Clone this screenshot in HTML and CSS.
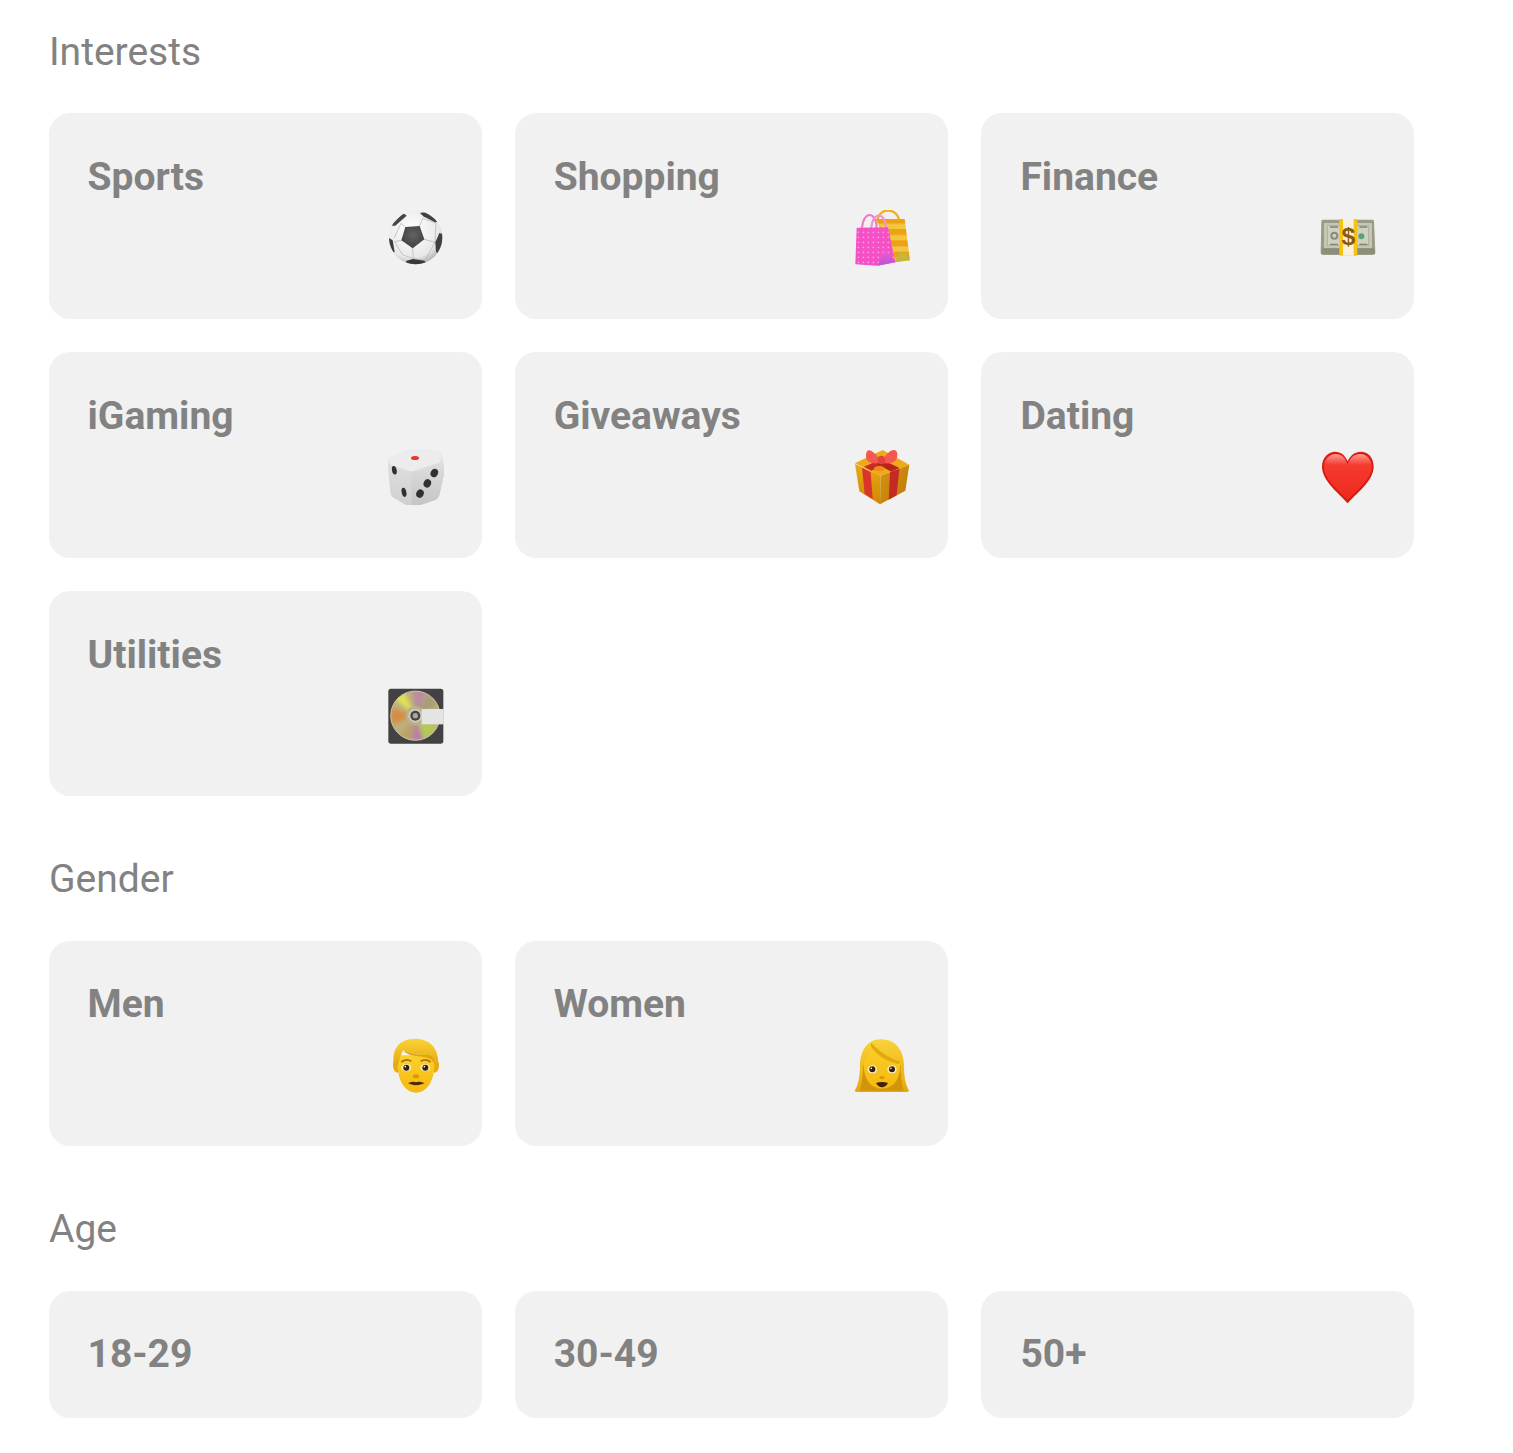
FILE: index.html
```html
<!DOCTYPE html>
<html lang="en">
<head>
<meta charset="utf-8">
<title>Audience</title>
<link rel="stylesheet" href="styles.css">
</head>
<body>
<svg class="defs" width="0" height="0" aria-hidden="true">
  <defs>
    <radialGradient id="ball" cx="0.42" cy="0.36" r="0.72"><stop offset="0" stop-color="#fff"/><stop offset="0.72" stop-color="#e8e8e8"/><stop offset="1" stop-color="#9d9d9d"/></radialGradient>
    <radialGradient id="patch" cx="0.5" cy="0.4" r="0.7"><stop offset="0" stop-color="#636363"/><stop offset="1" stop-color="#3a3a3a"/></radialGradient>
    <pattern id="dots" width="15" height="15" patternUnits="userSpaceOnUse"><rect width="15" height="15" fill="#f550c6"/><circle cx="7" cy="7" r="2.6" fill="#fa9fe0"/></pattern>
    <pattern id="stripes" width="34" height="34" patternUnits="userSpaceOnUse"><rect width="34" height="34" fill="#eda212"/><rect y="18" width="34" height="16" fill="#f0c642"/></pattern>
    <linearGradient id="gusset" x1="0" y1="0" x2="0" y2="1"><stop offset="0" stop-color="#ef5fcc"/><stop offset="1" stop-color="#bb52d8"/></linearGradient>
    <linearGradient id="dieL" x1="0" y1="0" x2="0" y2="1"><stop offset="0" stop-color="#e4e4e4"/><stop offset="1" stop-color="#cfcfcf"/></linearGradient>
    <linearGradient id="dieR" x1="0" y1="0" x2="0" y2="1"><stop offset="0" stop-color="#dedede"/><stop offset="1" stop-color="#c4c4c4"/></linearGradient>
    <linearGradient id="giftL" x1="0" y1="0" x2="0" y2="1"><stop offset="0" stop-color="#eaa912"/><stop offset="1" stop-color="#d08706"/></linearGradient>
    <linearGradient id="giftR" x1="0" y1="0" x2="1" y2="1"><stop offset="0" stop-color="#d79310"/><stop offset="1" stop-color="#bc7a06"/></linearGradient>
    <linearGradient id="heart" x1="0" y1="0" x2="0" y2="1"><stop offset="0" stop-color="#ff9a90"/><stop offset="0.24" stop-color="#f53a30"/><stop offset="1" stop-color="#ee2a1e"/></linearGradient>
    <linearGradient id="face" x1="0" y1="0" x2="0" y2="1"><stop offset="0" stop-color="#fdd02c"/><stop offset="1" stop-color="#f4b90f"/></linearGradient>
    <linearGradient id="hair" x1="0" y1="0" x2="0" y2="1"><stop offset="0" stop-color="#f9d338"/><stop offset="1" stop-color="#e5a80e"/></linearGradient>
    <filter id="soft" x="-20%" y="-20%" width="140%" height="140%"><feGaussianBlur stdDeviation="7"/></filter>
    <clipPath id="ballClip"><circle cx="137" cy="128" r="80"/></clipPath>
    <clipPath id="discClip"><circle cx="136" cy="128" r="74"/></clipPath>
  </defs>
</svg>

<main class="page">
  <section class="group">
    <h2 class="label">Interests</h2>
    <div class="cards">
      <div class="card">
        <h3 class="name">Sports</h3>
        <svg class="emoji" viewBox="54 45 168 168" aria-hidden="true">
          <circle cx="137" cy="128" r="80" fill="url(#ball)"/>
          <g clip-path="url(#ballClip)">
            <g stroke="#bcbcbc" stroke-width="2.5" fill="none">
              <path d="M107 97 93 85M148 95 158 70M160 132 195 142M128 158 130 190M97 135 74 140M130 190 165 195M130 190 98 180M195 142 165 195M74 140 98 180M158 70 198 84 195 142M93 85 72 130"/>
            </g>
            <path d="M106 96 149 93 163 133 128 160 94 136Z" fill="url(#patch)"/>
            <path d="M62 92 100 54 110 62 76 92Z" fill="#474747"/>
            <path d="M150 54 180 48 205 80 195 82 160 64Z" fill="#3f3f3f"/>
            <path d="M196 142 208 114 225 120 210 180 198 170Z" fill="#404040"/>
            <path d="M108 198 128 192 164 197 170 212 110 212Z" fill="#393939"/>
            <path d="M55 128 68 136 74 172 60 170Z" fill="#3c3c3c"/>
          </g>
        </svg>
      </div>
      <div class="card">
        <h3 class="name">Shopping</h3>
        <svg class="emoji" viewBox="54 45 168 168" aria-hidden="true">
          <path d="M124 78C128 36 184 36 190 78" fill="none" stroke="#f0b21e" stroke-width="7"/>
          <path d="M120 72 206 72 222 196 174 202Z" fill="url(#stripes)"/>
          <path d="M176 202 222 196 214 178 190 170Z" fill="#c4b53c"/>
          <path d="M78 102C80 46 122 46 122 102" fill="none" stroke="#f277cf" stroke-width="6"/>
          <path d="M106 100C108 48 150 50 150 100" fill="none" stroke="#f490d8" stroke-width="6"/>
          <path d="M62 98 156 96 178 202 124 212 58 208Z" fill="url(#dots)"/>
          <path d="M124 212 148 164 178 202Z" fill="url(#gusset)"/>
        </svg>
      </div>
      <div class="card">
        <h3 class="name">Finance</h3>
        <svg class="emoji" viewBox="54 45 168 168" aria-hidden="true">
          <path d="M62 74H212Q216 74 216 80L220 172Q220 180 212 180H64Q56 180 56 172L58 80Q58 74 62 74Z" fill="#9b9b88"/>
          <rect x="66" y="84" width="144" height="76" rx="3" fill="#c5c6b4"/>
          <rect x="76" y="92" width="124" height="60" fill="#cfd0c0" stroke="#a6a795" stroke-width="2"/>
          <path d="M84 96H108M172 96H196M84 148H108M172 148H196" stroke="#7f8174" stroke-width="4"/>
          <circle cx="97" cy="122" r="12" fill="#8a8c7a"/><circle cx="97" cy="122" r="6" fill="#d0d0c2"/>
          <circle cx="178" cy="124" r="9" fill="#5b9f7b"/>
          <path d="M60 160H216L219 176H58Z" fill="#8d8e7a"/>
          <rect x="112" y="72" width="54" height="110" fill="#f6c30f"/>
          <rect x="123" y="72" width="32" height="110" fill="#f7f1dc"/>
          <text class="dollar" x="139" y="151">$</text>
        </svg>
      </div>
      <div class="card">
        <h3 class="name">iGaming</h3>
        <svg class="emoji" viewBox="54 45 168 168" aria-hidden="true">
          <g transform="translate(137 130) scale(1.07) translate(-137 -130)">
            <path d="M58 92Q56 80 70 72L124 50Q136 46 150 48L196 56Q210 58 212 72L218 108Q220 120 214 132L204 178Q200 192 186 196L136 212Q124 216 110 208L76 188Q66 182 66 170Z" fill="url(#dieL)"/>
            <path d="M125 110 206 88Q216 88 218 108Q220 120 214 132L204 178Q200 192 186 196L136 212Q130 214 126 212Z" fill="url(#dieR)"/>
            <path d="M62 82Q66 74 74 72L124 50Q136 46 150 48L196 56Q206 58 210 70 212 84 200 90L132 112Q122 114 112 110L70 96Q60 92 62 82Z" fill="#ececec"/>
          </g>
          <ellipse cx="135" cy="72" rx="12" ry="6" fill="#e8332f"/>
          <ellipse cx="73" cy="109" rx="7" ry="13" fill="#303030" transform="rotate(-12 73 109)"/>
          <ellipse cx="102" cy="175" rx="7" ry="14" fill="#303030" transform="rotate(-12 102 175)"/>
          <ellipse cx="193" cy="117" rx="11" ry="13" fill="#303030" transform="rotate(25 193 117)"/>
          <ellipse cx="172" cy="148" rx="11" ry="13" fill="#303030" transform="rotate(25 172 148)"/>
          <ellipse cx="150" cy="179" rx="11" ry="13" fill="#303030" transform="rotate(25 150 179)"/>
        </svg>
      </div>
      <div class="card">
        <h3 class="name">Giveaways</h3>
        <svg class="emoji" viewBox="54 45 168 168" aria-hidden="true">
          <path d="M57 90 70 172 132 211 134 125Z" fill="url(#giftL)"/>
          <path d="M134 125 220 92 208 170 132 211Z" fill="url(#giftR)"/>
          <path d="M57 88 140 48 220 92 134 126Z" fill="#edab1a"/>
          <path d="M78 101 104 115 110 195 86 180Z" fill="#d9352b"/>
          <path d="M162 115 190 104 182 184 158 197Z" fill="#c42a22"/>
          <path d="M84 98 160 66 176 74 106 110Z" fill="#c92c23"/>
          <path d="M112 64 190 102 166 113 94 74Z" fill="#b92319"/>
          <ellipse cx="130" cy="104" rx="16" ry="8" fill="#ef8a1b"/>
          <path d="M132 78C110 46 92 40 90 62 88 86 110 92 134 86Z" fill="#f4584e"/>
          <path d="M140 78C160 44 184 40 184 62 184 86 160 92 138 86Z" fill="#f4584e"/>
          <ellipse cx="136" cy="78" rx="11" ry="13" fill="#e4423a"/>
        </svg>
      </div>
      <div class="card">
        <h3 class="name">Dating</h3>
        <svg class="emoji" viewBox="54 45 168 168" aria-hidden="true">
          <path d="M137 208C116 182 60 142 60 98 60 70 80 53 100 53 116 53 130 64 137 82 144 64 160 53 176 53 198 53 215 70 215 98 215 142 158 182 137 208Z" fill="#d81c12"/>
          <path d="M137 198C116 174 66 138 66 98 66 74 84 60 101 60 118 60 131 72 137 92 143 72 157 60 175 60 192 60 209 74 209 98 209 138 158 174 137 198Z" fill="url(#heart)"/>
        </svg>
      </div>
      <div class="card">
        <h3 class="name">Utilities</h3>
        <svg class="emoji" viewBox="54 45 168 168" aria-hidden="true">
          <rect x="55" y="47" width="165" height="165" rx="8" fill="#424242"/>
          <circle cx="136" cy="128" r="74" fill="#bfae7d"/>
          <g clip-path="url(#discClip)">
            <g filter="url(#soft)">
              <path d="M136 128 100 50 70 75Z" fill="#dfe453"/>
              <path d="M136 128 62 105V155Z" fill="#d48d3f"/>
              <path d="M136 128 128 50H172Z" fill="#b98aa2"/>
              <path d="M136 128 175 58 205 95Z" fill="#a99c78"/>
              <path d="M136 128 124 205H162Z" fill="#b97fa2"/>
              <path d="M136 128 165 205 205 165Z" fill="#b3ca52"/>
              <path d="M136 128 90 190 122 205Z" fill="#b8a266"/>
            </g>
          </g>
          <circle cx="136" cy="128" r="74" fill="none" stroke="#d3ccae" stroke-width="2.5"/>
          <circle cx="136" cy="128" r="30" fill="#b9b18f" opacity=".85"/>
          <circle cx="136" cy="128" r="21" fill="#cfcab4"/>
          <circle cx="136" cy="128" r="15" fill="#444"/>
          <circle cx="136" cy="128" r="8" fill="#a8a8a8"/>
          <rect x="155" y="108" width="66" height="46" fill="#e4e4e4"/>
        </svg>
      </div>
    </div>
  </section>

  <section class="group">
    <h2 class="label">Gender</h2>
    <div class="cards">
      <div class="card">
        <h3 class="name">Men</h3>
        <svg class="emoji" viewBox="54 45 168 168" aria-hidden="true">
          <ellipse cx="82" cy="130" rx="13" ry="22" fill="#eaa90f"/>
          <ellipse cx="194" cy="130" rx="13" ry="22" fill="#eaa90f"/>
          <path d="M84 100C76 180 108 212 138 212 168 212 200 180 192 100Z" fill="url(#face)"/>
          <path d="M72 128C64 84 86 50 136 50 178 50 208 78 204 128L194 130C190 106 186 102 180 98 150 102 118 94 100 84 92 98 88 112 84 130Z" fill="url(#hair)"/>
          <path d="M100 84C118 94 150 102 180 98 188 102 192 112 194 128 186 104 160 106 140 102 120 100 106 94 100 84Z" fill="#dfa40f"/>
          <path d="M94 120Q110 108 124 118" fill="none" stroke="#a8730a" stroke-width="5"/>
          <path d="M152 118Q166 108 182 120" fill="none" stroke="#a8730a" stroke-width="5"/>
          <ellipse cx="109" cy="137" rx="15" ry="11" fill="#fbeebc"/>
          <ellipse cx="166" cy="137" rx="15" ry="11" fill="#fbeebc"/>
          <circle cx="109" cy="137" r="9" fill="#33210c"/>
          <circle cx="166" cy="137" r="9" fill="#33210c"/>
          <circle cx="106" cy="134" r="2.4" fill="#fff"/>
          <circle cx="163" cy="134" r="2.4" fill="#fff"/>
          <ellipse cx="138" cy="163" rx="10" ry="6" fill="#df9708"/>
          <path d="M114 184Q130 177 138 181 146 177 164 184 146 191 138 189 130 191 114 184Z" fill="#4a2c09"/>
        </svg>
      </div>
      <div class="card">
        <h3 class="name">Women</h3>
        <svg class="emoji" viewBox="54 45 168 168" aria-hidden="true">
          <path d="M137 52C86 50 72 100 72 130 72 170 64 196 56 206Q57 210 66 210H210Q218 210 219 206C210 190 204 170 204 130 204 96 186 52 137 52Z" fill="url(#hair)"/>
          <path d="M82 130C80 170 76 190 72 206H204C198 190 194 170 194 130Z" fill="#d2950a"/>
          <path d="M84 118C80 172 104 200 138 200 172 200 196 172 192 118 168 112 128 90 106 62 104 88 94 106 84 118Z" fill="url(#face)"/>
          <path d="M106 62C128 90 168 112 192 118L190 126C160 122 124 104 104 72Z" fill="#e2a80f"/>
          <ellipse cx="109" cy="142" rx="14" ry="12" fill="#fbeebc"/>
          <ellipse cx="168" cy="142" rx="14" ry="12" fill="#fbeebc"/>
          <circle cx="109" cy="142" r="9" fill="#33210c"/>
          <circle cx="168" cy="142" r="9" fill="#33210c"/>
          <circle cx="106" cy="139" r="2.4" fill="#fff"/>
          <circle cx="165" cy="139" r="2.4" fill="#fff"/>
          <ellipse cx="138" cy="167" rx="8" ry="5" fill="#df9708"/>
          <path d="M120 183Q138 177 156 183 148 196 138 196 128 196 120 183Z" fill="#3c2309"/>
        </svg>
      </div>
    </div>
  </section>

  <section class="group age">
    <h2 class="label">Age</h2>
    <div class="cards">
      <div class="card"><h3 class="name">18-29</h3></div>
      <div class="card"><h3 class="name">30-49</h3></div>
      <div class="card"><h3 class="name">50+</h3></div>
    </div>
  </section>
</main>
</body>
</html>
```
FILE: styles.css
```css
* { box-sizing: border-box; }
html, body { margin: 0; padding: 0; background: #fff; }
body { font-family: Roboto, "Liberation Sans", sans-serif; color: #808080; }
.defs { position: absolute; }
.page { padding: 29.9px 0 35px 49px; display: flex; flex-direction: column; gap: 60.7px; }
.label { margin: 0 0 39.5px; font-size: 39px; line-height: 44px; font-weight: 400; color: #828282; }
.cards { display: grid; grid-template-columns: repeat(3, 433.05px); gap: 33.3px 33.1px; }
.card { display: flex; flex-direction: column; padding: 41.7px 38px 41.4px 38.5px; background: #f1f1f1; border-radius: 21px; }
.card:nth-child(3n) { padding-left: 39.2px; }
.name { margin: 0; font-size: 39px; line-height: 44px; font-weight: 700; color: #828282; }
.emoji { display: block; width: 56px; height: 56px; align-self: flex-end; margin-top: 11px; margin-bottom: 11.4px; }
.dollar { font-family: "Liberation Sans", sans-serif; font-size: 74px; font-weight: 700; text-anchor: middle; fill: #8a5a08; }
.age .label { margin-bottom: 40px; }
.age .card { padding-top: 41.2px; padding-bottom: 41.6px; }
```
